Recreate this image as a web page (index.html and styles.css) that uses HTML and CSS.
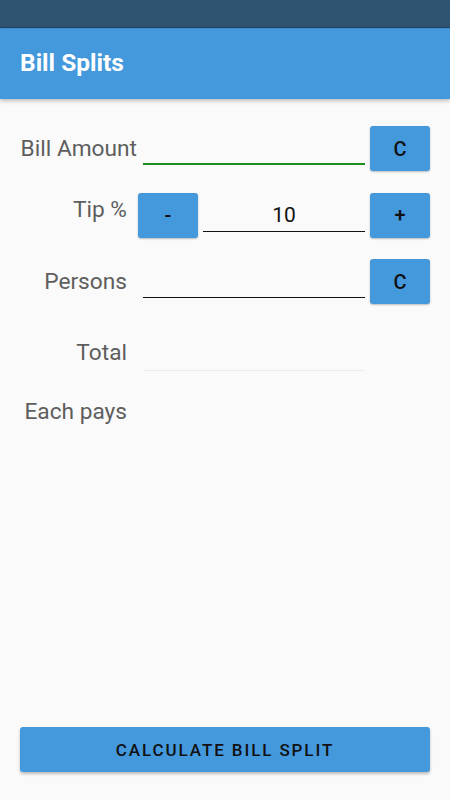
FILE: index.html
```html
<!DOCTYPE HTML>
<html>
<head>
<meta http-equiv="Content-Type" content="text/html; charset=utf-8">
<title>Bill Splits</title>
<link rel="stylesheet" href="styles.css">
</head>
<body>
<div class="statusBar"></div>
<div class="appBar"><h1>Bill Splits</h1></div>

<div class="form">
	<div class="label wide">Bill Amount</div>
	<div class="field focused span2"></div>
	<button class="btn">C</button>

	<div class="label tip">Tip %</div>
	<button class="btn">-</button>
	<div class="field centered">10</div>
	<button class="btn">+</button>

	<div class="label">Persons</div>
	<div class="field span2"></div>
	<button class="btn">C</button>

	<div class="label total">Total</div>
	<div class="field readonly span2"></div>
	<div></div>

	<div class="label each">Each pays</div>
	<div class="span2"></div>
	<div></div>
</div>

<div class="bottom">
	<button class="calcBtn">CALCULATE BILL SPLIT</button>
</div>
</body>
</html>
```

FILE: styles.css
```css
@charset "utf-8";

html, body{
	margin:0;
	padding:0;
	height:100%;
}

body{
	font-family:Roboto, "Liberation Sans", sans-serif;
	background-color:#fafafa;
	display:flex;
	flex-direction:column;
}

.statusBar{
	height:27px;
	background-color:#30546f;
	border-bottom:1px solid #23415a;
}

.appBar{
	height:70px;
	background-color:#4498dc;
	border-top:1px solid #3a8fd6;
	box-shadow:0 2px 4px rgba(0,0,0,0.25);
	display:flex;
	align-items:center;
	padding-left:20px;
}

h1{
	margin:0;
	font-size:24.5px;
	font-weight:bold;
	color:white;
	margin-top:-3px;
}

.form{
	display:grid;
	grid-template-columns:113px 60px 162px 60px;
	grid-auto-rows:45px;
	column-gap:5px;
	row-gap:21.5px;
	padding:27px 20px 0 20px;
}

.label{
	font-size:22.7px;
	line-height:45px;
	color:#5e5e5e;
	text-align:right;
	padding-right:6px;
	white-space:nowrap;
	align-self:start;
}

.label.wide{
	padding-right:0;
	margin-right:-4px;
}

.label.tip{
	margin-top:-6px;
}

.label.total{
	margin-top:4px;
}

.label.each{
	margin-top:-3px;
}

.span2{
	grid-column:span 2;
}

.field{
	height:38px;
	border-bottom:1.5px solid #111;
	align-self:start;
	font-size:21px;
	color:#111;
	line-height:44px;
}

.field.span2{
	margin-left:5px;
}

.field.focused{
	height:37px;
	border-bottom:2px solid #1e8f1e;
}

.field.centered{
	text-align:center;
}

.field.readonly{
	border-bottom:1px solid #ececec;
	margin-top:6px;
}

.btn{
	height:45px;
	width:60px;
	border:none;
	border-radius:3px;
	background-color:#4498dc;
	color:#111;
	font-family:Roboto, "Liberation Sans", sans-serif;
	font-size:20px;
	font-weight:500;
	box-shadow:0 1px 2px rgba(0,0,0,0.25);
	padding:0;
}

.bottom{
	margin-top:auto;
	padding:0 20px 28px 20px;
}

.calcBtn{
	width:100%;
	height:45px;
	border:none;
	border-radius:3px;
	background-color:#4498dc;
	color:#111;
	font-family:Roboto, "Liberation Sans", sans-serif;
	font-size:17px;
	font-weight:500;
	letter-spacing:1.9px;
	box-shadow:0 2px 3px rgba(0,0,0,0.25);
}
```
